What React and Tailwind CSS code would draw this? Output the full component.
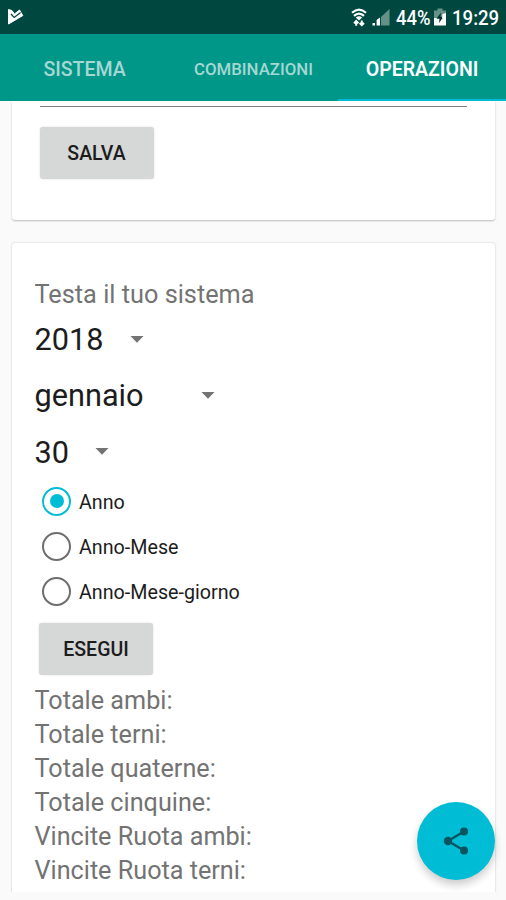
import { useState } from "react";

const years = { label: "2018", width: "w-[109px]" };
const months = { label: "gennaio", width: "w-[180px]" };
const days = { label: "30", width: "w-[74px]" };

const modes = ["Anno", "Anno-Mese", "Anno-Mese-giorno"];

const results = [
  "Totale ambi:",
  "Totale terni:",
  "Totale quaterne:",
  "Totale cinquine:",
  "Vincite Ruota ambi:",
  "Vincite Ruota terni:",
];

const StatusBar = () => {
  return (
    <div className="h-[34px] shrink-0 bg-[#00483f] flex items-center justify-between pl-[7px] pr-[7px] text-white">
      <svg width="18" height="18" viewBox="0 0 18 18">
        <path d="M1.5 1.5 L5 2.6 L7.5 6 L12.5 2 L15.8 7.6 L1.5 16 Z" fill="#fff" stroke="#fff" strokeLinejoin="round" />
        <path d="M4 6 L7.2 9.4 L13.6 4.6" fill="none" stroke="#00483f" strokeWidth="1.3" />
      </svg>
      <div className="flex items-center">
        <svg className="mr-[5px]" width="16" height="19" viewBox="0 0 16 19">
          <path d="M1 4.8 Q8 -1.6 15 4.8 M3 7.9 Q8 3.2 13 7.9" fill="none" stroke="#fff" strokeWidth="2.2" />
          <path d="M4.8 9.4 Q8 6.9 11.2 9.4 L8 12.6 Z" fill="#fff" />
          <path d="M5.2 17.8 V13 M3 15.4 L5.2 13 L7.4 15.2 M10.8 12.4 V17.4 M8.6 15 L10.8 17.2 L13 15" fill="none" stroke="#fff" strokeWidth="2" />
        </svg>
        <svg className="mr-[6px]" width="18" height="18" viewBox="0 0 18 18">
          <path d="M9 9 L17.5 1 V17.5 H9 Z" fill="#669189" />
          <path d="M0.5 15 H3 V17.5 H0.5 Z M4.6 12 L8 9.5 V17.5 H4.6 Z" fill="#fff" />
        </svg>
        <span className="pt-[2px] text-[20px] leading-[34px] font-medium w-[36px] whitespace-nowrap inline-block origin-left scale-x-[0.92]">44%</span>
        <svg className="ml-[2px] mr-[6px]" width="12" height="18" viewBox="0 0 12 18">
          <path d="M3.5 0.5 H8.5 V2.5 H12 V10 H0 V2.5 H3.5 Z" fill="#669189" />
          <path d="M0 10 H12 V17.5 H0 Z" fill="#fff" />
          <path d="M7 4.5 L2.5 10.8 H5.5 L5 15 L9.5 8.7 H6.5 Z" fill="#00352e" />
          <path d="M8.5 6 L12 5 V10 H8 Z" fill="#fff" />
        </svg>
        <span className="pt-[2px] text-[20px] leading-[34px] font-medium w-[47px] whitespace-nowrap inline-block origin-left scale-x-[0.93]">19:29</span>
      </div>
    </div>
  );
};

const Tabs = () => {
  return (
    <div className="h-[67px] shrink-0 bg-[#009688] flex text-center font-medium leading-[71px]">
      <div className="w-[169px] text-[19.5px] text-[#a6d8d3]">SISTEMA</div>
      <div className="w-[169px] text-[16.8px] leading-[70px] text-[#a6d8d3]">COMBINAZIONI</div>
      <div className="w-[168px] text-[19.5px] font-semibold text-white border-b-2 border-[#00bcd4]">OPERAZIONI</div>
    </div>
  );
};

const Spinner = ({ item }) => {
  return (
    <div className={`${item.width} h-[56.3px] flex items-center justify-between text-[30.7px] text-[#1c1c1c]`}>
      <span className="pt-[2px]">{item.label}</span>
      <svg width="14" height="7" viewBox="0 0 14 7">
        <path d="M0.5 0 H13.5 L7 6.8 Z" fill="#737373" />
      </svg>
    </div>
  );
};

const Button = ({ children }) => {
  return (
    <button className="block ml-[4.5px] pt-[2px] w-[114px] h-[52px] rounded-[3px] bg-[#d6d7d7] text-[19.5px] font-medium text-[#1c1c1c] shadow-[0_0_2px_rgba(0,0,0,0.15)]">
      {children}
    </button>
  );
};

const App = () => {
  const [mode, setMode] = useState("Anno");

  return (
    <div className="relative w-[506px] h-[900px] flex flex-col overflow-hidden bg-[#fafafa] font-[Roboto,sans-serif]">
      <StatusBar />
      <Tabs />
      <div className="h-[791px] overflow-hidden pl-[12px] pr-[11px]">
        <div className="h-[119px] pl-[23px] pr-[28px] pt-[5px] bg-white rounded-b-[3px] shadow-[0_1px_2px_rgba(0,0,0,0.25)]">
          <div className="ml-[5px] mb-[20px] h-px bg-[#808080]"></div>
          <Button>SALVA</Button>
        </div>

        <div className="mt-[23px] h-[680px] pl-[22.5px] pt-[35px] bg-white rounded-t-[3px] shadow-[0_0_2px_rgba(0,0,0,0.25)]">
          <p className="text-[25.3px] leading-[34px] text-[#737373]">Testa il tuo sistema</p>
          <div className="-mt-[1px]">
            <Spinner item={years} />
            <Spinner item={months} />
            <Spinner item={days} />
          </div>
          <div className="pl-[7.5px] -mt-[1px] mb-[9px]">
            {modes.map((item) => (
              <div key={item} onClick={() => setMode(item)} className="h-[45px] flex items-center gap-[8px] text-[19.7px] text-[#1c1c1c]">
                {mode === item ? (
                  <span className="size-[29px] rounded-full border-[2.5px] border-[#00bcd4] flex items-center justify-center">
                    <span className="size-[14px] rounded-full bg-[#00bcd4]"></span>
                  </span>
                ) : (
                  <span className="size-[29px] rounded-full border-[2.5px] border-[#6e6e6e]"></span>
                )}
                <span className="pt-[2px]">{item}</span>
              </div>
            ))}
          </div>
          <Button>ESEGUI</Button>
          <div className="mt-[9px]">
            {results.map((item) => (
              <p key={item} className="text-[25.2px] leading-[34.1px] text-[#737373]">{item}</p>
            ))}
          </div>
        </div>
      </div>

      <button className="absolute left-[417px] top-[802px] size-[78px] rounded-full bg-[#00bcd4] flex items-center justify-center shadow-[0_5px_8px_rgba(0,0,0,0.2)]">
        <svg width="26" height="28" viewBox="0 0 26 28">
          <path d="M21 4.5 L5 14 L21 23.5" fill="none" stroke="#075560" strokeWidth="2.4" />
          <circle cx="21" cy="4.5" r="4" fill="#075560" />
          <circle cx="5" cy="14" r="4.2" fill="#075560" />
          <circle cx="21" cy="23.5" r="4" fill="#075560" />
        </svg>
      </button>
    </div>
  );
};

export default App;
